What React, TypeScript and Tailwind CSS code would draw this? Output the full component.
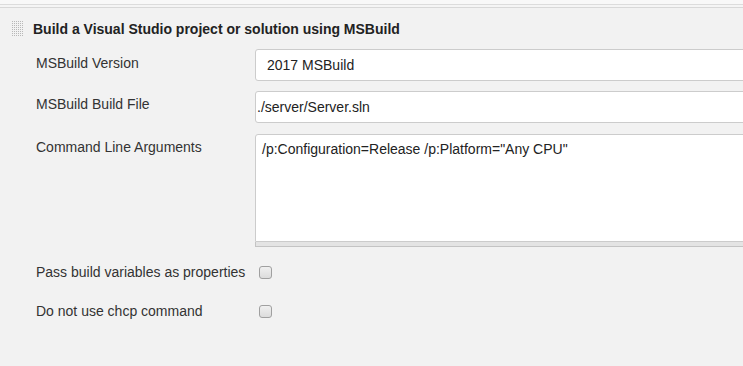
function DragHandle() {
  const dots = []
  for (let y = 0; y < 8; y++) {
    for (let x = 0; x < 6; x++) {
      dots.push(<rect key={`${x}-${y}`} x={x * 2} y={y * 2} width="1" height="1" fill="#b8b8b8" />)
    }
  }
  return (
    <svg width="12" height="16" viewBox="0 0 12 16" className="shrink-0">
      {dots}
    </svg>
  )
}

function Checkbox() {
  return (
    <div className="ml-[4px] h-[13px] w-[13px] rounded-[3px] border border-[#a0a0a0] bg-gradient-to-b from-[#f0f0f0] to-[#dcdcdc]" />
  )
}

export default function App() {
  return (
    <div className="h-[366px] w-[743px] overflow-hidden bg-[#f2f2f2] font-['Liberation_Sans',Arial,sans-serif] text-[14px] text-[#333]">
      <div className="h-[4px] bg-[#f8f8f8]" />
      <div className="h-[1px] bg-[#dcdcdc]" />
      <div className="h-[2px] bg-[#f5f5f5]" />
      <div className="h-[1px] bg-[#d8d8d8]" />

      <div className="mt-[13px] flex h-[16px] items-center pl-[12px]">
        <DragHandle />
        <span className="ml-[9px] text-[14px] font-bold text-[#222]">
          Build a Visual Studio project or solution using MSBuild
        </span>
      </div>

      <div className="mt-[12px] flex items-start">
        <div className="w-[255px] shrink-0 pl-[36px] pt-[6px] leading-[16px]">MSBuild Version</div>
        <div className="h-[32px] w-[520px] shrink-0 rounded-[3px] border border-[#ccc] bg-white pl-[11px] leading-[30px] text-[#222]">
          2017 MSBuild
        </div>
      </div>

      <div className="mt-[10px] flex items-start">
        <div className="w-[255px] shrink-0 pl-[36px] pt-[5px] leading-[16px]">MSBuild Build File</div>
        <div className="h-[32px] w-[520px] shrink-0 rounded-[3px] border border-[#ccc] bg-white pl-[1px] leading-[30px] text-[#222]">
          ./server/Server.sln
        </div>
      </div>

      <div className="mt-[11px] flex items-start">
        <div className="w-[255px] shrink-0 pl-[36px] pt-[5px] leading-[16px]">Command Line Arguments</div>
        <div className="w-[520px] shrink-0">
          <div className="h-[108px] rounded-t-[3px] border border-[#ccc] bg-white pl-[6px] pt-[6px] leading-[16px] text-[#222]">
            /p:Configuration=Release /p:Platform="Any CPU"
          </div>
          <div className="h-[5px] border border-t-0 border-[#c4c4c4] bg-[#e4e4e4]" />
        </div>
      </div>

      <div className="mt-[16px] flex h-[18px] items-center">
        <div className="w-[255px] shrink-0 pl-[36px]">Pass build variables as properties</div>
        <Checkbox />
      </div>

      <div className="mt-[21px] flex h-[18px] items-center">
        <div className="w-[255px] shrink-0 pl-[36px]">Do not use chcp command</div>
        <Checkbox />
      </div>
    </div>
  )
}
